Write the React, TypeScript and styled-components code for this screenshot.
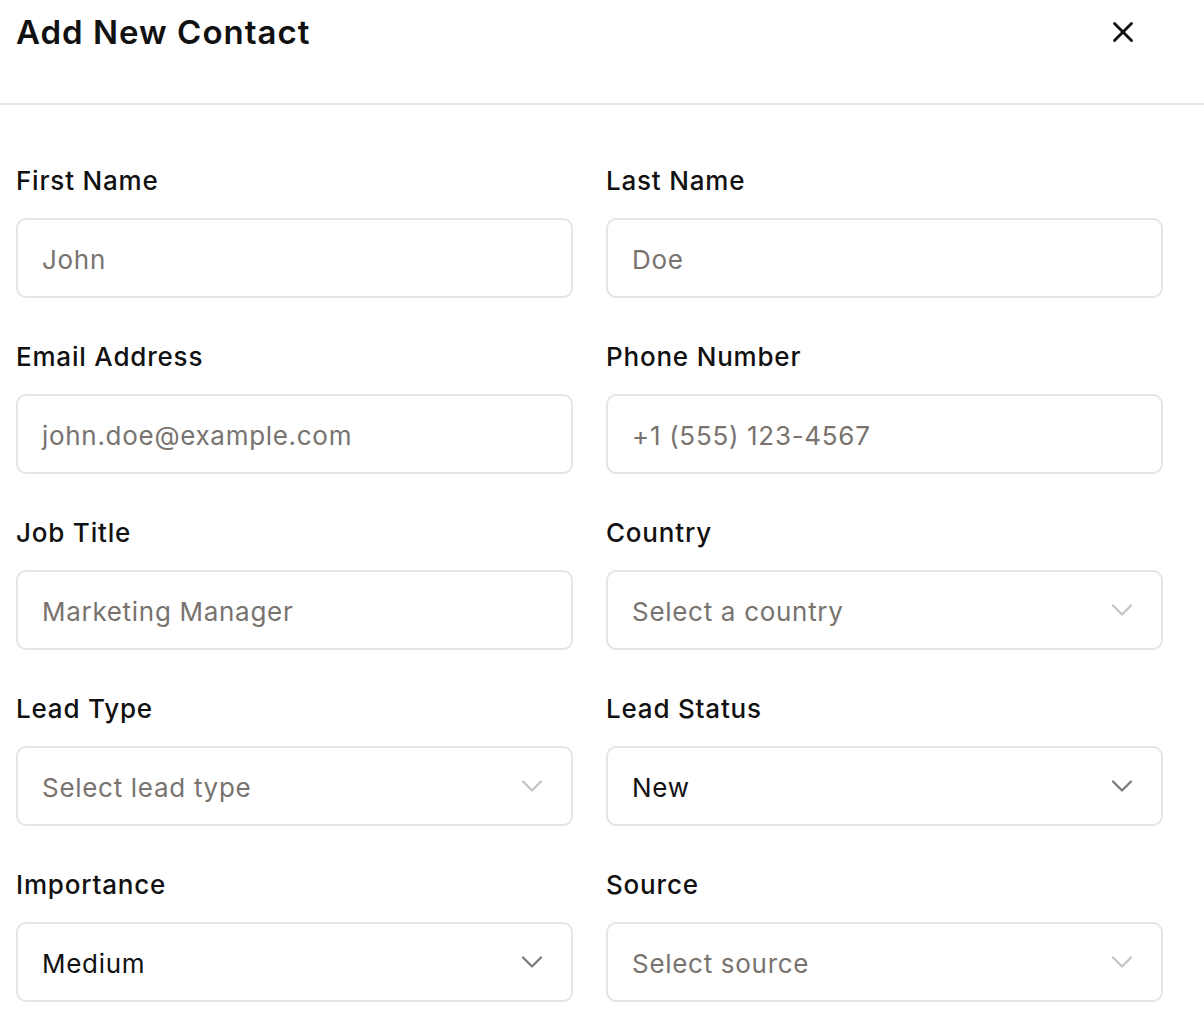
import {FC} from 'react';
import styled, {createGlobalStyle} from 'styled-components';
import {X, ChevronDown} from 'lucide-react';

const GlobalStyle = createGlobalStyle`
  html, body {
    margin: 0;
    padding: 0;
    background: #ffffff;
  }

  body {
    font-family: Inter, "Noto Sans", sans-serif;
    color: #111111;
  }
`;

const Header = styled.header`
  display: flex;
  align-items: center;
  justify-content: space-between;

  padding: 12px 64px 51px 16px;

  border-bottom: 2px solid #e7e7ea;
`;

const Title = styled.h2`
  margin: 0;

  font-size: 33px;
  font-weight: 600;
  line-height: 40px;
  letter-spacing: 1px;

  color: #111111;
`;

const CloseButton = styled.button`
  display: flex;
  align-items: center;
  justify-content: center;

  width: 34px;
  height: 34px;
  padding: 0;

  border: none;
  background: transparent;
  color: #111111;
  cursor: pointer;
`;

const Form = styled.form`
  display: grid;
  grid-template-columns: 1fr 1fr;
  column-gap: 33px;
  row-gap: 41px;

  padding: 58px 41px 40px 16px;
`;

const Field = styled.div`
  display: flex;
  flex-direction: column;
  gap: 19px;
`;

const Label = styled.label`
  font-size: 26px;
  font-weight: 500;
  line-height: 36px;
  letter-spacing: 0.8px;

  color: #111111;
`;

const Box = styled.div<{$select?: boolean}>`
  display: flex;
  align-items: center;
  justify-content: space-between;
  box-sizing: border-box;

  height: 80px;
  padding: 3px ${p => (p.$select ? '21px' : '24px')} 0 24px;

  border: 2px solid #e5e5e5;
  border-radius: 10px;
  background: #ffffff;
`;

const Value = styled.span<{$placeholder?: boolean}>`
  font-size: 26px;
  font-weight: 400;
  line-height: 36px;
  letter-spacing: 0.7px;

  color: ${p => (p.$placeholder ? '#78736f' : '#111111')};
`;

const Chevron = styled(ChevronDown)<{$muted?: boolean}>`
  flex-shrink: 0;
  margin-top: -3px;
  color: ${p => (p.$muted ? '#c4c4c4' : '#7a7a7a')};
`;

type FieldDef = {
  label: string;
  text: string;
  placeholder?: boolean;
  select?: boolean;
};

const fields: FieldDef[] = [
  {label: 'First Name', text: 'John', placeholder: true},
  {label: 'Last Name', text: 'Doe', placeholder: true},
  {label: 'Email Address', text: 'john.doe@example.com', placeholder: true},
  {label: 'Phone Number', text: '+1 (555) 123-4567', placeholder: true},
  {label: 'Job Title', text: 'Marketing Manager', placeholder: true},
  {label: 'Country', text: 'Select a country', placeholder: true, select: true},
  {label: 'Lead Type', text: 'Select lead type', placeholder: true, select: true},
  {label: 'Lead Status', text: 'New', select: true},
  {label: 'Importance', text: 'Medium', select: true},
  {label: 'Source', text: 'Select source', placeholder: true, select: true},
];

const App: FC = () => (
  <>
    <GlobalStyle />
    <Header>
      <Title>Add New Contact</Title>
      <CloseButton type="button" aria-label="Close">
        <X size={34} strokeWidth={2} />
      </CloseButton>
    </Header>
    <Form>
      {fields.map(f => (
        <Field key={f.label}>
          <Label>{f.label}</Label>
          <Box $select={f.select}>
            <Value $placeholder={f.placeholder}>{f.text}</Value>
            {f.select && <Chevron size={36} strokeWidth={1.5} $muted={f.placeholder} />}
          </Box>
        </Field>
      ))}
    </Form>
  </>
);

export default App;
